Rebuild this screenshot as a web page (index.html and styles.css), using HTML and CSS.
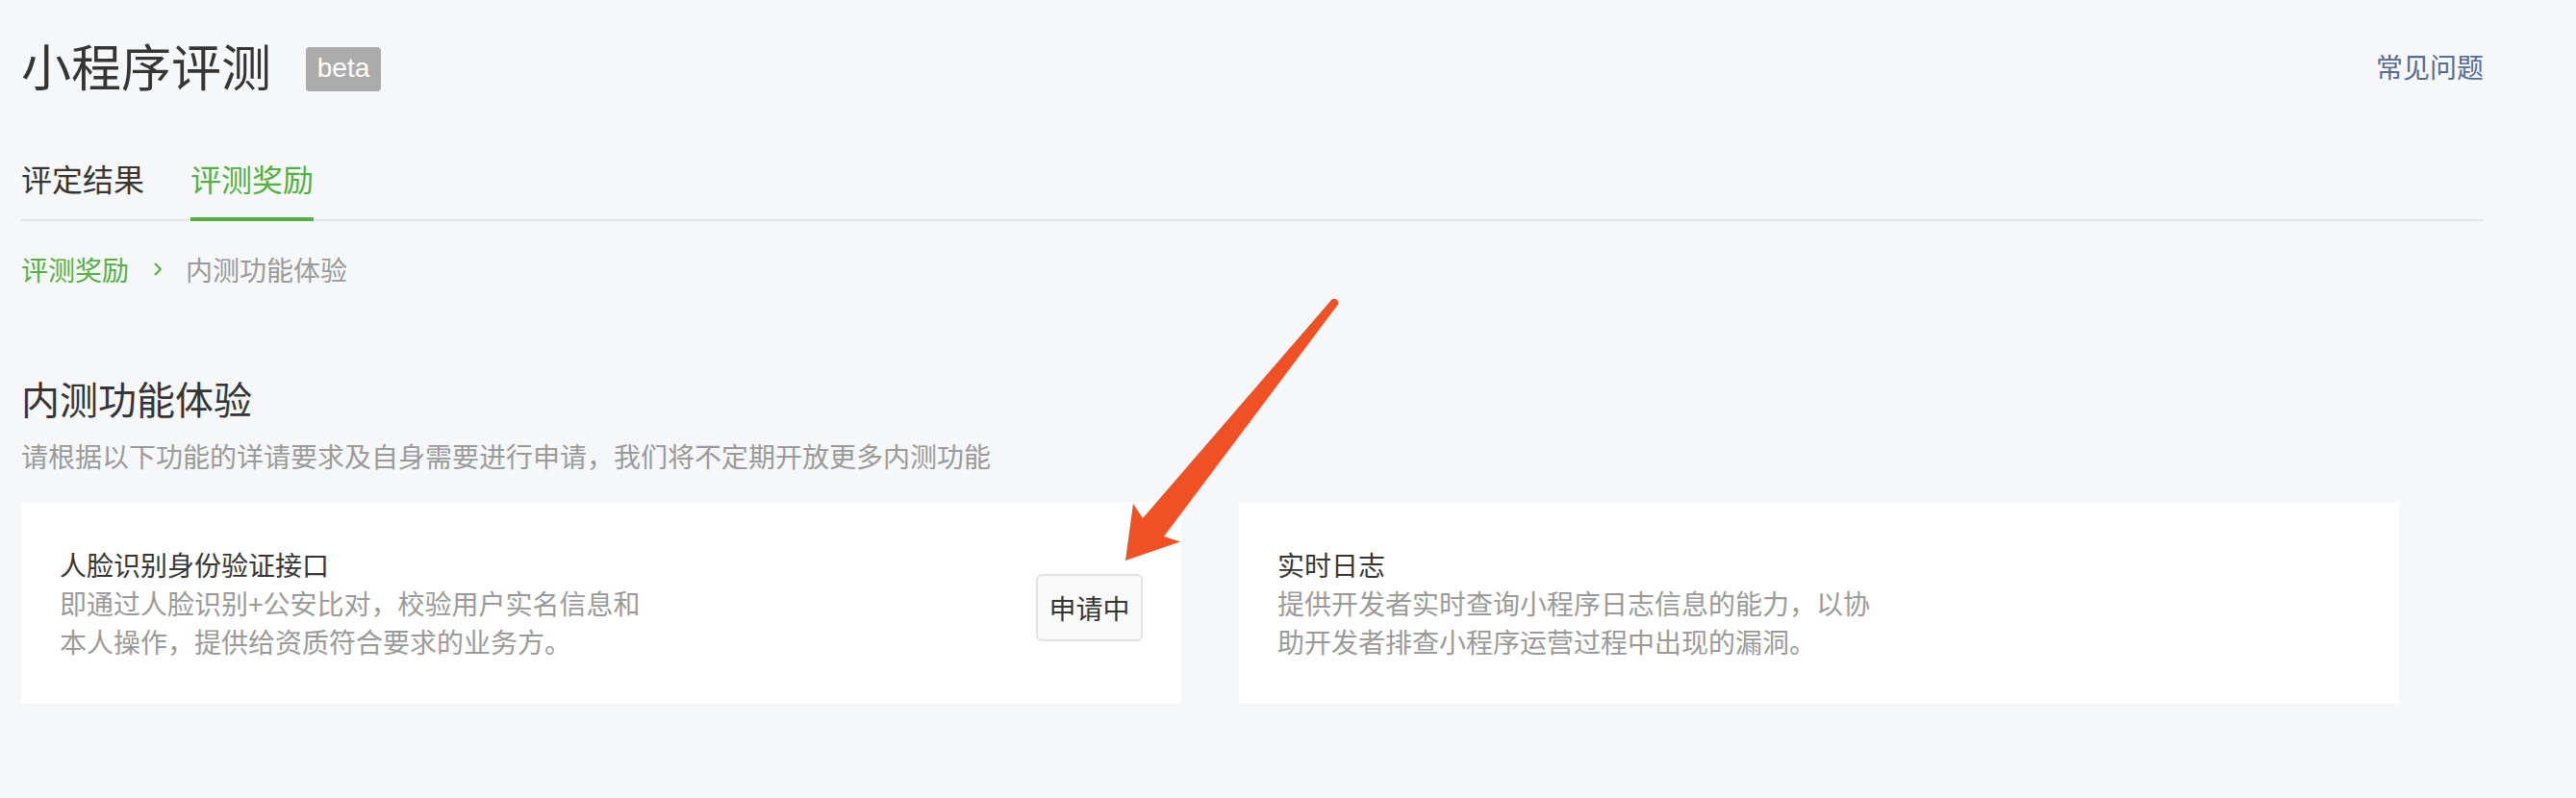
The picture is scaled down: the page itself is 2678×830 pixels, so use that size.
FILE: index.html
```html
<!DOCTYPE html>
<html lang="zh-CN">
<head>
<meta charset="utf-8">
<title>小程序评测</title>
<link rel="stylesheet" href="styles.css">
</head>
<body>
<div class="page">
  <header class="header">
    <div class="title-wrap">
      <h1 class="title">小程序评测</h1>
      <span class="badge">beta</span>
    </div>
    <a class="faq" href="#">常见问题</a>
  </header>

  <nav class="tabs">
    <a class="tab" href="#">评定结果</a>
    <a class="tab tab-active" href="#">评测奖励</a>
  </nav>

  <div class="crumbs">
    <a class="crumb-link" href="#">评测奖励</a>
    <svg class="crumb-sep" width="11" height="16" viewBox="0 0 11 16"><polyline points="3,2 9,8 3,14" fill="none" stroke="#52b044" stroke-width="2"/></svg>
    <span class="crumb-current">内测功能体验</span>
  </div>

  <h2 class="section-title">内测功能体验</h2>
  <p class="section-desc">请根据以下功能的详请要求及自身需要进行申请，我们将不定期开放更多内测功能</p>

  <div class="cards">
    <div class="card">
      <div class="card-body">
        <div class="card-title">人脸识别身份验证接口</div>
        <div class="card-desc">即通过人脸识别+公安比对，校验用户实名信息和本人操作，提供给资质符合要求的业务方。</div>
      </div>
      <button class="btn">申请中</button>
    </div>
    <div class="card">
      <div class="card-body">
        <div class="card-title">实时日志</div>
        <div class="card-desc">提供开发者实时查询小程序日志信息的能力，以协助开发者排查小程序运营过程中出现的漏洞。</div>
      </div>
    </div>
  </div>
</div>

<svg class="arrow" width="2678" height="830" viewBox="0 0 2678 830">
  <circle cx="1387" cy="315" r="4.2" fill="#ef5126"/>
  <polygon fill="#ef5126" points="1383.7,312.4 1390.3,317.6 1210,558 1227,563.5 1170,583 1178,524 1188,539"/>
</svg>
</body>
</html>
```

FILE: styles.css
```css
html, body {
  margin: 0;
  padding: 0;
}
body {
  background: #f6f7f9;
  font-family: "Noto Sans CJK SC", "Noto Sans", sans-serif;
  color: #353535;
  width: 2678px;
  height: 830px;
  position: relative;
  overflow: hidden;
}
a {
  text-decoration: none;
}
.page {
  width: 2560px;
  padding: 0 22px;
}
.header {
  display: flex;
  justify-content: space-between;
  align-items: center;
  padding-top: 32px;
  height: 72px;
}
.title-wrap {
  display: flex;
  align-items: center;
}
.title {
  margin: 0;
  font-size: 52px;
  font-weight: 400;
  line-height: 72px;
  color: #353535;
}
.badge {
  margin-left: 36px;
  margin-top: 8px;
  width: 78px;
  height: 46px;
  box-sizing: border-box;
  background: #ababab;
  color: #fff;
  border-radius: 4px;
  font-family: "Liberation Sans", "Noto Sans", sans-serif;
  font-size: 28px;
  line-height: 44px;
  text-align: center;
}
.faq {
  font-size: 28px;
  line-height: 40px;
  color: #576b95;
  margin-top: 2px;
}
.tabs {
  display: flex;
  gap: 48px;
  margin-top: 59px;
  border-bottom: 2px solid #e3e4e6;
}
.tab {
  font-size: 32px;
  line-height: 44px;
  padding-bottom: 19px;
  border-bottom: 4px solid transparent;
  margin-bottom: -2px;
  color: #353535;
}
.tab-active {
  color: #52b044;
  border-bottom-color: #52b044;
}
.crumbs {
  display: flex;
  align-items: center;
  margin-top: 30px;
  font-size: 28px;
  line-height: 40px;
}
.crumb-link {
  color: #52b044;
}
.crumb-sep {
  margin: 0 24px 0 24px;
}
.crumb-current {
  color: #9a9a9a;
}
.section-title {
  margin: 86px 0 0;
  font-size: 40px;
  font-weight: 400;
  line-height: 56px;
  color: #353535;
}
.section-desc {
  margin: 12px 0 0;
  font-size: 28px;
  line-height: 40px;
  color: #9a9a9a;
}
.cards {
  display: flex;
  gap: 60px;
  margin-top: 28px;
}
.card {
  width: 1206px;
  height: 210px;
  box-sizing: border-box;
  background: #fff;
  padding: 0 40px;
  display: flex;
  align-items: center;
  justify-content: space-between;
}
.card-title {
  font-size: 28px;
  line-height: 40px;
  color: #353535;
}
.card-desc {
  width: 622px;
  font-size: 28px;
  line-height: 40px;
  color: #9a9a9a;
}
.btn {
  margin-top: 10px;
  width: 111px;
  height: 70px;
  box-sizing: border-box;
  background: #f9f9fa;
  border: 2px solid #e3e4e6;
  border-radius: 6px;
  font-family: "Noto Sans CJK SC", sans-serif;
  font-size: 28px;
  color: #353535;
  padding: 0;
}
.arrow {
  position: absolute;
  left: 0;
  top: 0;
  pointer-events: none;
}
```
